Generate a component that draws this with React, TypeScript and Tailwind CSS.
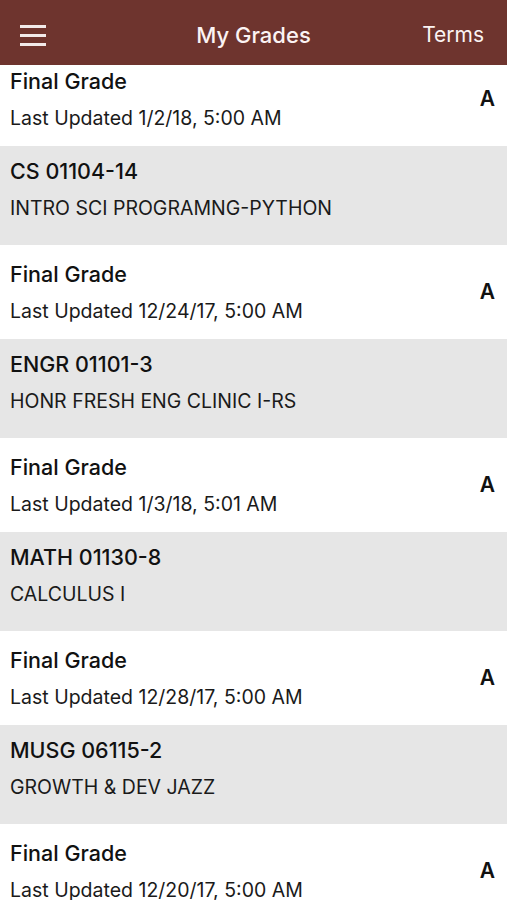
const rows = [
  { code: "CS 01104-14", name: "INTRO SCI PROGRAMNG-PYTHON", updated: "1/2/18, 5:00 AM", grade: "A" },
  { code: "ENGR 01101-3", name: "HONR FRESH ENG CLINIC I-RS", updated: "12/24/17, 5:00 AM", grade: "A" },
  { code: "MATH 01130-8", name: "CALCULUS I", updated: "1/3/18, 5:01 AM", grade: "A" },
  { code: "MUSG 06115-2", name: "GROWTH & DEV JAZZ", updated: "12/28/17, 5:00 AM", grade: "A" },
  { code: "", name: "", updated: "12/20/17, 5:00 AM", grade: "A" },
];

function GradeRow({ updated, grade }: { updated: string; grade: string }) {
  return (
    <div className="flex h-[94px] items-center bg-white pl-[10px] pr-[12px]">
      <div className="flex flex-1 flex-col">
        <div className="text-[21.5px] font-medium leading-[24px] text-[#111]">Final Grade</div>
        <div className="mt-[14px] text-[19.5px] leading-[23px] text-[#1a1a1a]">Last Updated {updated}</div>
      </div>
      <div className="text-[21px] font-semibold text-[#111]">{grade}</div>
    </div>
  );
}

function CourseRow({ code, name }: { code: string; name: string }) {
  return (
    <div className="flex h-[99px] flex-col bg-[#e6e6e6] pl-[10px] pt-[13px]">
      <div className="text-[21.5px] font-medium leading-[24px] text-[#111]">{code}</div>
      <div className="mt-[14px] text-[19.5px] leading-[23px] text-[#1a1a1a]">{name}</div>
    </div>
  );
}

export default function App() {
  return (
    <div className="h-[900px] w-[507px] overflow-hidden bg-white" style={{ fontFamily: "Inter, 'Noto Sans', sans-serif" }}>
      <header className="relative z-10 flex h-[65px] items-center justify-between bg-[#6e342e] px-[20px] pt-[5px] text-[#fbf3f3]">
        <button aria-label="Menu" className="flex h-[21px] w-[26px] flex-col justify-between">
          <span className="block h-[3px] w-full bg-[#f3eaea]" />
          <span className="block h-[3px] w-full bg-[#f3eaea]" />
          <span className="block h-[3px] w-full bg-[#f3eaea]" />
        </button>
        <div className="absolute left-1/2 top-[5px] flex h-[60px] -translate-x-1/2 items-center text-[22px] font-medium">My Grades</div>
        <div className="pr-[3px] text-[21px]">Terms</div>
      </header>
      <div className="-mt-[13px]">
        {rows.map((r, i) => (
          <div key={i}>
            <GradeRow updated={r.updated} grade={r.grade} />
            {r.code ? <CourseRow code={r.code} name={r.name} /> : null}
          </div>
        ))}
      </div>
    </div>
  );
}
